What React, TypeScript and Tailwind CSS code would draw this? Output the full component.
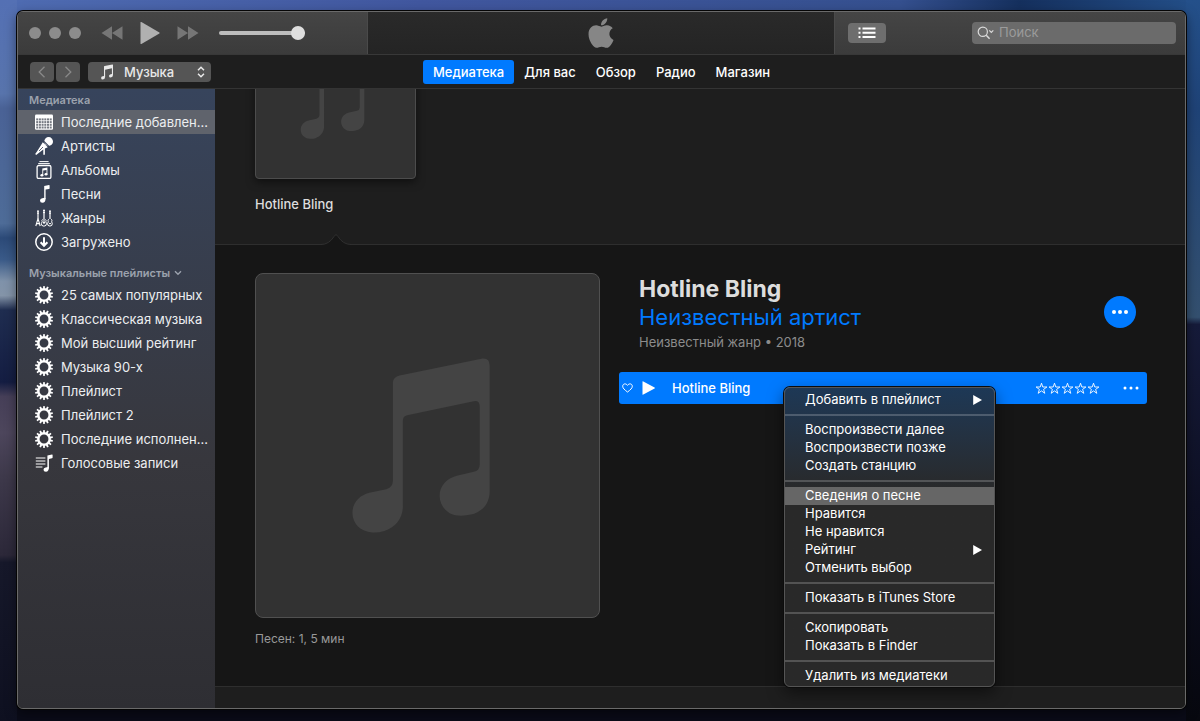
import React from "react";
import { FaApple } from "react-icons/fa";

type IconProps = { className?: string };

function GridIcon({ className }: IconProps) {
  return (
    <svg viewBox="0 0 18 16" className={className} aria-hidden="true">
      <rect x="0" y="0.5" width="18" height="15.2" rx="1.2" fill="currentColor" />
      {[4.4, 7.1, 9.8, 12.5].map((y) =>
        [1.2, 3.9, 6.6, 9.3, 12, 14.7].map((x) => (
          <rect key={`${x}-${y}`} x={x} y={y} width="2" height="2" fill="#777b83" />
        )),
      )}
    </svg>
  );
}

function MicIcon({ className }: IconProps) {
  return (
    <svg viewBox="0 0 18 18" className={className} aria-hidden="true">
      <circle cx="13.6" cy="4.5" r="4.4" fill="currentColor" />
      <path d="M8.4 3.8 L14.2 9.6" stroke="#38435a" strokeWidth="1.1" />
      <path
        d="M7.8 5.200 L12.8 10.200 L9.900 11.600 L9.900 17.800 L8.300 17.800 L8.300 12.600 L3.400 16.200 L1.200 17.900 L0.200 16.900 L2 14.600 Z"
        fill="currentColor"
      />
      <path d="M4 14 L8 10" stroke="#38435a" strokeWidth="0.8" />
    </svg>
  );
}

function AlbumsIcon({ className }: IconProps) {
  return (
    <svg viewBox="0 0 18 18" className={className} aria-hidden="true">
      <path d="M4.4 0.6 H13.6 M3.2 2.6 H14.8" stroke="currentColor" strokeWidth="1" />
      <rect x="2.1" y="4.5" width="13.8" height="13" rx="1.6" fill="none" stroke="currentColor" strokeWidth="1.3" />
      <path d="M7.3 7.6 L12.4 6.6 V13 H11.5 V8.9 L8.2 9.6 V14.2 H7.3 Z" fill="currentColor" />
      <ellipse cx="6.9" cy="14.2" rx="1.5" ry="1.2" fill="currentColor" />
      <ellipse cx="11" cy="13.2" rx="1.5" ry="1.2" fill="currentColor" />
    </svg>
  );
}

function SongIcon({ className }: IconProps) {
  return (
    <svg viewBox="0 0 18 18" className={className} aria-hidden="true">
      <path d="M9.2 0.9 L14 0 Q14.6 0 14.6 0.6 V3.2 Q14.6 3.7 14 3.9 L10.6 4.6 V14 H9.2 Z" fill="currentColor" />
      <path d="M10.6 13.4 Q10.6 17.6 7.4 17.7 Q5 17.7 5 15.5 Q5 13.6 7.2 13.3 L9.6 12.7 Z" fill="currentColor" />
    </svg>
  );
}

function GuitarsIcon({ className }: IconProps) {
  return (
    <svg viewBox="0 0 18 18" className={className} aria-hidden="true" fill="none" stroke="currentColor">
      <path d="M3 1.4 V10 M9 0.6 V10 M15 1.4 V10" strokeWidth="1.2" />
      <path d="M2 2.2 H4 M2 4.2 H4 M8 1.6 H10 M8 3.6 H10 M14 2.2 H16 M14 4.2 H16" strokeWidth="1" />
      <path d="M3 9.6 L0.8 17 M3 9.6 L5.2 17 M1.5 14.6 H4.6" strokeWidth="1.1" />
      <path
        d="M7.6 10.4 Q6.4 11.2 7.2 12.8 Q5.8 14.4 6.8 16.4 Q9 18 11 16.4 Q12 14.4 10.8 12.8 Q11.6 11.2 10.4 10.4 M8 13.6 H10 M9 10 V15"
        strokeWidth="1"
      />
      <path
        d="M13.6 10.2 Q12.6 11.2 13.3 12.8 Q12 14.6 13 16.4 Q15 17.8 16.8 16.4 Q17.8 14.6 16.7 12.8 Q17.4 11.2 16.4 10.2 M14 14.6 H16"
        strokeWidth="1"
      />
    </svg>
  );
}

function DownloadedIcon({ className }: IconProps) {
  return (
    <svg viewBox="0 0 18 18" className={className} aria-hidden="true" fill="none" stroke="currentColor">
      <circle cx="9" cy="9" r="8.2" strokeWidth="1.5" />
      <path d="M9 4.2 V12" strokeWidth="2" />
      <path d="M5.6 9.2 L9 12.8 L12.4 9.2" strokeWidth="2" />
    </svg>
  );
}

function GearIcon({ className }: IconProps) {
  return (
    <svg viewBox="0 0 18 18" className={className} aria-hidden="true">
      {Array.from({ length: 14 }, (_, i) => (
        <rect
          key={i}
          x="8.1"
          y="0"
          width="1.8"
          height="3"
          rx="0.4"
          fill="currentColor"
          transform={`rotate(${(i * 360) / 14} 9 9)`}
        />
      ))}
      <circle cx="9" cy="9" r="5.7" fill="none" stroke="currentColor" strokeWidth="2.500" />
    </svg>
  );
}

function PlaylistIcon({ className }: IconProps) {
  return (
    <svg viewBox="0 0 18 18" className={className} aria-hidden="true">
      <path d="M0.8 4 H10.4 M0.8 7 H10.4 M0.8 10 H10.4 M0.8 13 H7.4" stroke="currentColor" strokeWidth="1.2" />
      <path d="M12.4 1.4 L17 0.5 Q17.6 0.4 17.6 1 V3.6 Q17.6 4.1 17 4.2 L13.9 4.9 V14.4 H12.4 Z" fill="currentColor" />
      <path d="M13.9 13.6 Q13.9 17.7 10.9 17.8 Q8.5 17.8 8.500 15.7 Q8.5 13.9 10.6 13.5 L13 13 Z" fill="currentColor" />
    </svg>
  );
}

/* Beamed note used on covers that have no artwork. */
function CoverNote({ className }: IconProps) {
  return (
    <svg viewBox="0 0 345 345" className={className} aria-hidden="true">
      <path
        fill="#444444"
        d="M137.700 109 Q138 103.500 144.500 102 L228 85 Q235 84.500 235 92 V219 C235 232 226 240 216 242 Q210 243.500 203 243 C192 242 184.700 233 184.700 223 C184.700 213 192 205.500 202 203 L219 199 Q225 197.500 225 192 V133 Q225 127 219 128 L152 142 Q147.700 143 147.700 147.500 V234 C147.700 246 140 255 129 258.500 Q123 260.300 117 260 C105 259.500 97 251 97 240.500 C97 230 104 222.500 114 220 L131 216.500 Q137.700 214.500 137.700 208 Z"
      />
    </svg>
  );
}

function SmallNote({ className }: IconProps) {
  return (
    <svg viewBox="0 0 14 16" className={className} aria-hidden="true">
      <path
        fill="currentColor"
        d="M4 2.600 Q4 2 4.600 1.900 L12.400 0.400 Q13 0.300 13 0.900 V11 Q13 13.300 10.700 13.500 Q9 13.500 9 12 Q9 10.700 10.600 10.300 L11.900 10 V4.300 L5.100 5.700 V13 Q5.100 15.300 2.900 15.500 Q1.100 15.500 1.100 14 Q1.100 12.600 2.700 12.300 L4 12 Z"
      />
    </svg>
  );
}

function StarIcon({ className }: IconProps) {
  return (
    <svg viewBox="0 0 13 13" className={className} aria-hidden="true">
      <path
        d="M6.500 1.200 L7.800 5 H11.900 L8.600 7.400 L9.800 11.300 L6.500 8.900 L3.200 11.300 L4.400 7.400 L1.100 5 H5.200 Z"
        fill="none"
        stroke="currentColor"
        strokeWidth="0.9"
      />
    </svg>
  );
}

function Dots({ className, radius = 2 }: IconProps & { radius?: number }) {
  return (
    <svg viewBox="0 0 16 4" className={className} aria-hidden="true" fill="currentColor">
      <circle cx="2" cy="2" r={radius} />
      <circle cx="8" cy="2" r={radius} />
      <circle cx="14" cy="2" r={radius} />
    </svg>
  );
}

type Entry = { label: string; Icon: (p: IconProps) => React.ReactElement; active?: boolean };

const library: Entry[] = [
  { label: "Последние добавлен...", Icon: GridIcon, active: true },
  { label: "Артисты", Icon: MicIcon },
  { label: "Альбомы", Icon: AlbumsIcon },
  { label: "Песни", Icon: SongIcon },
  { label: "Жанры", Icon: GuitarsIcon },
  { label: "Загружено", Icon: DownloadedIcon },
];

const playlists: Entry[] = [
  { label: "25 самых популярных", Icon: GearIcon },
  { label: "Классическая музыка", Icon: GearIcon },
  { label: "Мой высший рейтинг", Icon: GearIcon },
  { label: "Музыка 90-х", Icon: GearIcon },
  { label: "Плейлист", Icon: GearIcon },
  { label: "Плейлист 2", Icon: GearIcon },
  { label: "Последние исполнен...", Icon: GearIcon },
  { label: "Голосовые записи", Icon: PlaylistIcon },
];

const tabs = ["Медиатека", "Для вас", "Обзор", "Радио", "Магазин"];

const menuGroups: { label: string; submenu?: boolean; active?: boolean }[][] = [
  [{ label: "Добавить в плейлист", submenu: true }],
  [{ label: "Воспроизвести далее" }, { label: "Воспроизвести позже" }, { label: "Создать станцию" }],
  [
    { label: "Сведения о песне", active: true },
    { label: "Нравится" },
    { label: "Не нравится" },
    { label: "Рейтинг", submenu: true },
    { label: "Отменить выбор" },
  ],
  [{ label: "Показать в iTunes Store" }],
  [{ label: "Скопировать" }, { label: "Показать в Finder" }],
  [{ label: "Удалить из медиатеки" }],
];

function SidebarList({ entries }: { entries: Entry[] }) {
  return (
    <ul>
      {entries.map(({ label, Icon, active }) => (
        <li key={label}>
          <a
            href="#"
            className={`flex h-6 items-center gap-2 pl-[17px] text-[13px] text-[#eceef0] ${active ? "bg-[#5f636c]" : ""}`}
          >
            <Icon className="size-[18px] shrink-0 text-white" />
            <span className="whitespace-nowrap pt-[2px]">{label}</span>
          </a>
        </li>
      ))}
    </ul>
  );
}

function PlayerBar() {
  return (
    <header className="flex h-[43px] border-b border-[#383838]">
      <div className="flex w-[350px] items-center border-r border-[#4a4a4a] bg-linear-to-b from-[#454545] to-[#3b3b3b] pl-[11px]">
        <div className="flex gap-2">
          <button aria-label="Закрыть" className="size-3 rounded-full bg-[#8c8c8c]" />
          <button aria-label="Свернуть" className="size-3 rounded-full bg-[#8c8c8c]" />
          <button aria-label="Развернуть" className="size-3 rounded-full bg-[#8c8c8c]" />
        </div>
        <div className="ml-5 flex items-center gap-[17px] text-[#767676]">
          <button aria-label="Назад">
            <svg viewBox="0 0 22 14" className="h-[14px] w-[22px]" fill="currentColor" aria-hidden="true">
              <path d="M0.500 7 L11 0.200 V13.800 Z M11 7 L21.500 0.200 V13.800 Z" />
            </svg>
          </button>
          <button aria-label="Воспроизвести" className="text-[#b0b0b0]">
            <svg viewBox="0 0 20 24" className="h-6 w-5" fill="currentColor" aria-hidden="true">
              <path d="M0.500 1.500 Q0.500 0.600 1.400 1 L19.400 11.500 Q20 12 19.400 12.500 L1.400 23 Q0.500 23.400 0.500 22.500 Z" />
            </svg>
          </button>
          <button aria-label="Вперёд">
            <svg viewBox="0 0 22 14" className="h-[14px] w-[22px]" fill="currentColor" aria-hidden="true">
              <path d="M0.500 0.200 L11 7 L0.500 13.800 Z M11 0.200 L21.500 7 L11 13.800 Z" />
            </svg>
          </button>
        </div>
        <input
          type="range"
          aria-label="Громкость"
          defaultValue={100}
          className="ml-5 h-4 w-[86px] appearance-none bg-transparent [&::-webkit-slider-runnable-track]:h-1 [&::-webkit-slider-runnable-track]:rounded-full [&::-webkit-slider-runnable-track]:bg-[#bdbdbd] [&::-webkit-slider-thumb]:-mt-[5px] [&::-webkit-slider-thumb]:size-[14px] [&::-webkit-slider-thumb]:appearance-none [&::-webkit-slider-thumb]:rounded-full [&::-webkit-slider-thumb]:bg-[#dedede]"
        />
      </div>
      <div className="flex flex-1 items-center justify-center bg-linear-to-b from-[#2a2a2a] to-[#242424]">
        <FaApple className="size-[34px] text-[#868686]" aria-hidden="true" />
      </div>
      <div className="flex w-[351px] items-center justify-between border-l border-[#4a4a4a] bg-linear-to-b from-[#454545] to-[#3b3b3b] pl-[13px] pr-[9px]">
        <button aria-label="Далее" className="flex h-5 w-[38px] items-center justify-center rounded bg-[#6e6e6e] text-white">
          <svg viewBox="0 0 18 12" className="h-3 w-[18px]" fill="currentColor" aria-hidden="true">
            <path d="M0.500 0.500h2v2h-2z M4.500 0.500h13v2h-13z M0.500 4.800h2v2h-2z M4.500 4.800h13v2h-13z M0.500 9.100h2v2h-2z M4.500 9.100h13v2h-13z" />
          </svg>
        </button>
        <label className="flex h-[22px] w-[204px] items-center rounded bg-[#6b6b6b] pl-[5px]">
          <svg viewBox="0 0 18 14" className="h-[14px] w-[18px] shrink-0 text-[#dadada]" fill="none" stroke="currentColor" aria-hidden="true">
            <circle cx="5.800" cy="5.800" r="4.600" strokeWidth="1.200" />
            <path d="M9.200 9.200 L12.600 12.800" strokeWidth="1.500" />
            <path d="M12.300 4.300 L14.300 6.300 L16.300 4.300" strokeWidth="1.200" />
          </svg>
          <input
            type="search"
            aria-label="Поиск"
            placeholder="Поиск"
            className="ml-1 w-full min-w-0 bg-transparent text-[13px] text-white outline-none placeholder:text-[#9b9b9b]"
          />
        </label>
      </div>
    </header>
  );
}

function NavBar() {
  return (
    <div className="grid h-[34px] grid-cols-[1fr_auto_1fr] items-center border-b border-[#343434] bg-[#1e1e1e]">
      <div className="flex items-center pl-3 text-[#888888]">
        <button aria-label="Предыдущая страница" className="flex h-5 w-6 items-center justify-center rounded bg-[#555555]">
          <svg viewBox="0 0 8 12" className="h-3 w-2" fill="none" stroke="currentColor" strokeWidth="1.300" aria-hidden="true">
            <path d="M6.500 0.800 L1.200 6 L6.500 11.200" />
          </svg>
        </button>
        <button aria-label="Следующая страница" className="ml-[2px] flex h-5 w-6 items-center justify-center rounded bg-[#555555]">
          <svg viewBox="0 0 8 12" className="h-3 w-2" fill="none" stroke="currentColor" strokeWidth="1.300" aria-hidden="true">
            <path d="M1.500 0.800 L6.800 6 L1.500 11.200" />
          </svg>
        </button>
        <div className="relative ml-2 text-[#e8e8e8]">
          <SmallNote className="pointer-events-none absolute left-3 top-[2px] h-4 w-[14px]" />
          <select
            aria-label="Раздел медиатеки"
            className="block h-5 w-[123px] appearance-none rounded bg-[#555555] pl-9 text-[13px] font-medium leading-5 outline-none"
          >
            <option>Музыка</option>
          </select>
          <svg
            viewBox="0 0 8 12"
            className="pointer-events-none absolute right-[6px] top-1 h-3 w-2"
            fill="none"
            stroke="currentColor"
            strokeWidth="1.500"
            aria-hidden="true"
          >
            <path d="M1 4.200 L4 1.200 L7 4.200 M1 7.800 L4 10.800 L7 7.800" />
          </svg>
        </div>
      </div>
      <nav className="flex">
        {tabs.map((tab, i) => (
          <a
            key={tab}
            href="#"
            className={`rounded-[3px] px-[10px] text-[13px] font-medium leading-6 text-white ${i === 0 ? "bg-[#007aff]" : ""}`}
          >
            {tab}
          </a>
        ))}
      </nav>
      <div />
    </div>
  );
}

function Sidebar() {
  return (
    <aside className="w-[197px] shrink-0 bg-linear-to-b from-[#37445c] via-[#37373d] via-60% to-[#2e2e33]">
      <h2 className="pb-[2px] pl-[11px] pt-[3px] text-[11px] font-semibold leading-4 text-[#9ca2ad]">Медиатека</h2>
      <SidebarList entries={library} />
      <h2 className="flex items-center gap-1 pb-[2px] pl-[11px] pt-[11px] text-[11px] font-semibold leading-4 text-[#9ca2ad]">
        Музыкальные плейлисты
        <svg viewBox="0 0 8 6" className="h-[6px] w-2" fill="none" stroke="currentColor" strokeWidth="1.400" aria-hidden="true">
          <path d="M1 1.200 L4 4.200 L7 1.200" />
        </svg>
      </h2>
      <SidebarList entries={playlists} />
    </aside>
  );
}

function ContextMenu() {
  return (
    <div
      role="menu"
      className="absolute left-[165px] top-[15px] z-10 w-[211px] rounded-md border border-[#555555] bg-linear-to-b from-[#1d3856] via-[#292929] via-35% to-[#292929] pb-px pt-[3px] shadow-[0_0_0_1px_#0c0c0c,0_6px_16px_rgba(0,0,0,0.5)]"
    >
      {menuGroups.map((group, g) => (
        <div key={g} className={g > 0 ? "mt-[5px] border-t-2 border-white/20 pt-[5px]" : ""}>
          {group.map((item) => (
            <button
              key={item.label}
              role="menuitem"
              className={`flex h-[18px] w-full items-center justify-between pl-5 pr-3 text-left text-[13px] text-white ${
                item.active ? "bg-[#666666]" : ""
              }`}
            >
              {item.label}
              {item.submenu && (
                <svg viewBox="0 0 9 10" className="h-[10px] w-[9px]" fill="currentColor" aria-hidden="true">
                  <path d="M0.200 0 L9 5 L0.200 10 Z" />
                </svg>
              )}
            </button>
          ))}
        </div>
      ))}
    </div>
  );
}

function AlbumShelf() {
  return (
    <section className="relative h-[155px]">
      <div className="flex h-full flex-col justify-end overflow-hidden pl-10">
        <div className="size-[161px] shrink-0 rounded border border-[#4c4c4c] bg-[#323232] shadow-[0_3px_8px_rgba(0,0,0,0.5)]">
          <CoverNote className="size-full" />
        </div>
        <p className="pb-[30px] pt-[15px] text-[13px] font-medium leading-5 text-[#dddddd]">Hotline Bling</p>
      </div>
      <svg viewBox="0 0 30 13" className="absolute -bottom-[2px] left-[106px] z-10 h-[13px] w-[30px]" aria-hidden="true">
        <path d="M0 11.500 Q8 11.500 13 3.500 Q15 0 17 3.500 Q22 11.500 30 11.500 V13 H0 Z" fill="#161616" />
        <path d="M0 11.500 Q8 11.500 13 3.500 Q15 0 17 3.500 Q22 11.500 30 11.500" fill="none" stroke="#303030" />
      </svg>
    </section>
  );
}

function AlbumDetail() {
  return (
    <section className="flex gap-[19px] border-y border-[#2e2e2e] bg-[#161616] pb-[37px] pl-10 pr-[38px] pt-7">
      <div className="w-[345px] shrink-0">
        <div className="aspect-square rounded-lg border border-[#505050] bg-[#323232]">
          <CoverNote className="size-full" />
        </div>
        <p className="pt-[11px] text-[12px] leading-5 text-[#999999]">Песен: 1, 5 мин</p>
      </div>
      <div className="min-w-0 flex-1">
        <div className="flex h-[99px] items-start justify-between pl-5 pr-[11px]">
          <div>
            <h1 className="text-[23px] font-bold leading-8 text-[#dddddd]">Hotline Bling</h1>
            <a href="#" className="block text-[22px] leading-6 text-[#007aff]">
              Неизвестный артист
            </a>
            <p className="pt-[3px] text-[13px] leading-5 text-[#8c8c8c]">Неизвестный жанр • 2018</p>
          </div>
          <button aria-label="Другие действия" className="mt-[23px] flex size-8 items-center justify-center rounded-full bg-[#007aff] text-white">
            <Dots className="h-1 w-4" />
          </button>
        </div>
        <div className="relative flex h-8 items-center rounded-[3px] bg-[#007aff] pl-[3px] pr-2 text-white">
          <button aria-label="Нравится">
            <svg viewBox="0 0 11 10" className="h-[10px] w-[11px]" fill="none" stroke="currentColor" aria-hidden="true">
              <path d="M5.500 9 C2.500 6.800 0.700 5.200 0.700 3.200 C0.700 0.600 4 0 5.500 2.400 C7 0 10.300 0.600 10.300 3.200 C10.300 5.200 8.500 6.800 5.500 9 Z" />
            </svg>
          </button>
          <button aria-label="Воспроизвести песню" className="ml-[9px]">
            <svg viewBox="0 0 14 14" className="size-[14px]" fill="currentColor" aria-hidden="true">
              <path d="M0.500 0.800 Q0.500 0 1.300 0.400 L12.600 6.400 Q13.300 7 12.600 7.600 L1.300 13.600 Q0.500 14 0.500 13.200 Z" />
            </svg>
          </button>
          <span className="ml-4 flex-1 pt-px text-[13px] font-medium">Hotline Bling</span>
          <div className="flex" role="img" aria-label="Без оценки">
            {[0, 1, 2, 3, 4].map((i) => (
              <StarIcon key={i} className="size-[13px]" />
            ))}
          </div>
          <button aria-label="Меню песни" className="ml-[23px]">
            <Dots className="h-1 w-4" radius={1.5} />
          </button>
          <ContextMenu />
        </div>
      </div>
    </section>
  );
}

export default function App() {
  return (
    <div className="flex min-h-screen flex-col bg-[#0a0b18] bg-[linear-gradient(to_bottom,#5470b4_0%,#5874ac_13%,#4a6296_15%,#4e6c98_31%,#2c4a78_33%,#3a5a88_36%,#7f92aa_39%,#8494a8_41%,#1f2d50_43%,#141d42_53%,#463f58_55%,#4d465c_60%,#3e394b_66%,#2c2839_77%,#16182a_78%,#0e1020_100%),linear-gradient(to_bottom,#24508a_0%,#1f4377_15%,#34506f_44%,#161b3a_45%,#0e1024_70%,#07080f_100%),linear-gradient(to_right,#4f6cb2,#41579f_35%,#35508f_75%,#15305e_85%,#24508a)] bg-[length:17px_100%,14px_100%,100%_40px] bg-[position:left_top,right_top,left_top] bg-no-repeat pb-3 pl-[17px] pr-[14px] pt-[11px] font-['Inter','Liberation_Sans',sans-serif]">
      <div className="flex flex-1 flex-col overflow-hidden rounded-md border border-[#6a6a6a] bg-[#1e1e1e] shadow-[0_0_0_1px_#050505,0_4px_12px_rgba(0,0,0,0.5)]">
        <PlayerBar />
        <NavBar />
        <div className="flex flex-1">
          <Sidebar />
          <main className="min-w-0 flex-1 bg-[#1e1e1e]">
            <AlbumShelf />
            <AlbumDetail />
          </main>
        </div>
      </div>
    </div>
  );
}
